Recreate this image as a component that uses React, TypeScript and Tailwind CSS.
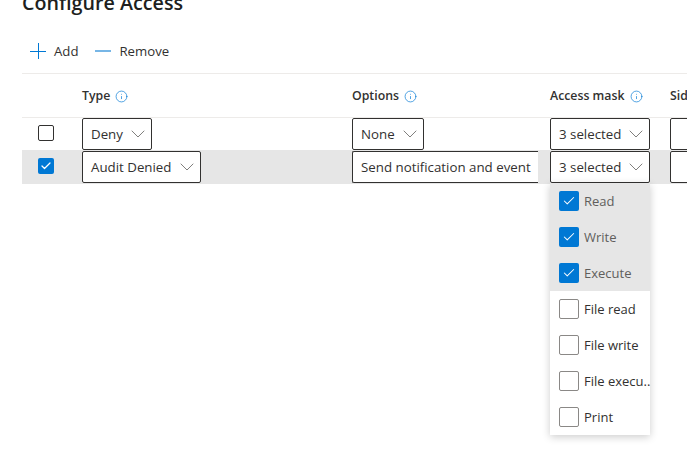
import { Check, ChevronDown, Info } from 'lucide-react'

const GRID = 'grid grid-cols-[60px_270px_198px_120px_100px] items-center'

const MASK_ITEMS = [
  { label: 'Read', checked: true },
  { label: 'Write', checked: true },
  { label: 'Execute', checked: true },
  { label: 'File read', checked: false },
  { label: 'File write', checked: false },
  { label: 'File execu..', checked: false },
  { label: 'Print', checked: false },
]

function Box({ checked }: { checked: boolean }) {
  return checked ? (
    <span className="flex h-5 w-5 shrink-0 items-center justify-center rounded-[2px] bg-[#0078d4]">
      <Check className="h-3.5 w-3.5 text-white" strokeWidth={1.75} />
    </span>
  ) : (
    <span className="h-5 w-5 shrink-0 rounded-[2px] border border-[#8a8886] bg-white" />
  )
}

function HeaderCell({ label }: { label: string }) {
  return (
    <div className="flex items-center gap-[5px] text-[12.3px] font-semibold text-[#323130]">
      <span className="pt-[1px]">{label}</span>
      <Info className="h-[13px] w-[13px] text-[#0078d4]" strokeWidth={1.25} />
    </div>
  )
}

function Select({ label, className }: { label?: string; className: string }) {
  return (
    <div className={`flex h-8 items-center justify-between rounded-[2px] border border-[#323130] bg-white pl-2 pr-[1px] text-[13.3px] text-[#323130] ${className}`}>
      <span className="pt-[1px]">{label}</span>
      <ChevronDown className="h-6 w-6 text-[#605e5c]" strokeWidth={0.8} />
    </div>
  )
}

export default function App() {
  return (
    <div className="relative h-[459px] w-[687px] overflow-hidden bg-white pl-[22px] font-['Open_Sans','Liberation_Sans',sans-serif]">
      <h1 className="mt-[-9px] h-[23px] text-[19.7px] leading-[24px] font-semibold whitespace-nowrap text-[#201f1e]">
        Configure Access
      </h1>

      {/* Toolbar */}
      <div className="flex h-[60px] items-center gap-[17px] border-b border-[#edebe9] pt-[15px] pl-2 text-[13.2px] text-[#323130]">
        <button className="flex items-center gap-2">
          <svg className="h-4 w-4 text-[#0078d4]" viewBox="0 0 16 16" fill="none" stroke="currentColor">
            <path d="M0 8.5h16M8.5 0v16" />
          </svg>
          <span className="pt-[1px]">Add</span>
        </button>
        <button className="flex items-center gap-2">
          <svg className="h-4 w-4 text-[#4a9ede]" viewBox="0 0 16 16" fill="none" stroke="currentColor">
            <path d="M0 8h16" strokeWidth={1.5} />
          </svg>
          <span className="pt-[1px]">Remove</span>
        </button>
      </div>

      {/* Table header */}
      <div className={`${GRID} h-[44px] border-b border-[#edebe9] pt-[1px]`}>
        <div />
        <HeaderCell label="Type" />
        <HeaderCell label="Options" />
        <HeaderCell label="Access mask" />
        <div className="pt-[1px] text-[12.3px] font-semibold text-[#323130]">Sid</div>
      </div>

      {/* Rows */}
      <div className={`${GRID} h-[32px]`}>
        <div className="mb-[2px] pl-4">
          <span className="block h-4 w-4 rounded-[2px] border border-[#323130]" />
        </div>
        <div><Select label="Deny" className="w-[70px]" /></div>
        <div><Select label="None" className="w-[72px]" /></div>
        <div><Select label="3 selected" className="w-[100px]" /></div>
        <div><Select className="w-[100px]" /></div>
      </div>
      <div className={`${GRID} h-[34px] bg-[#e6e6e6]`}>
        <div className="mb-[2px] pl-4">
          <span className="flex h-4 w-4 items-center justify-center rounded-[2px] bg-[#0078d4]">
            <Check className="h-3 w-3 text-white" strokeWidth={2.5} />
          </span>
        </div>
        <div><Select label="Audit Denied" className="w-[119px]" /></div>
        <div className="flex h-8 w-[186px] items-center overflow-hidden rounded-l-[2px] border-y border-l border-[#323130] bg-white pl-2 text-[13.3px] whitespace-nowrap text-[#323130]">
          <span className="pt-[1px]">Send notification and event</span>
        </div>
        <div><Select label="3 selected" className="w-[100px]" /></div>
        <div><Select className="w-[100px]" /></div>
      </div>

      {/* Access mask dropdown */}
      <div className="absolute top-[183px] left-[550px] w-[100px] bg-white shadow-[0_2px_8px_rgba(0,0,0,0.2)]">
        {MASK_ITEMS.map((item) => (
          <div
            key={item.label}
            className={`flex h-9 items-center gap-[5px] pl-[9px] text-[13px] whitespace-nowrap ${
              item.checked ? 'bg-[#e6e6e6] text-[#605e5c]' : 'text-[#323130]'
            }`}
          >
            <Box checked={item.checked} />
            <span className="pt-[2px]">{item.label}</span>
          </div>
        ))}
      </div>
    </div>
  )
}
